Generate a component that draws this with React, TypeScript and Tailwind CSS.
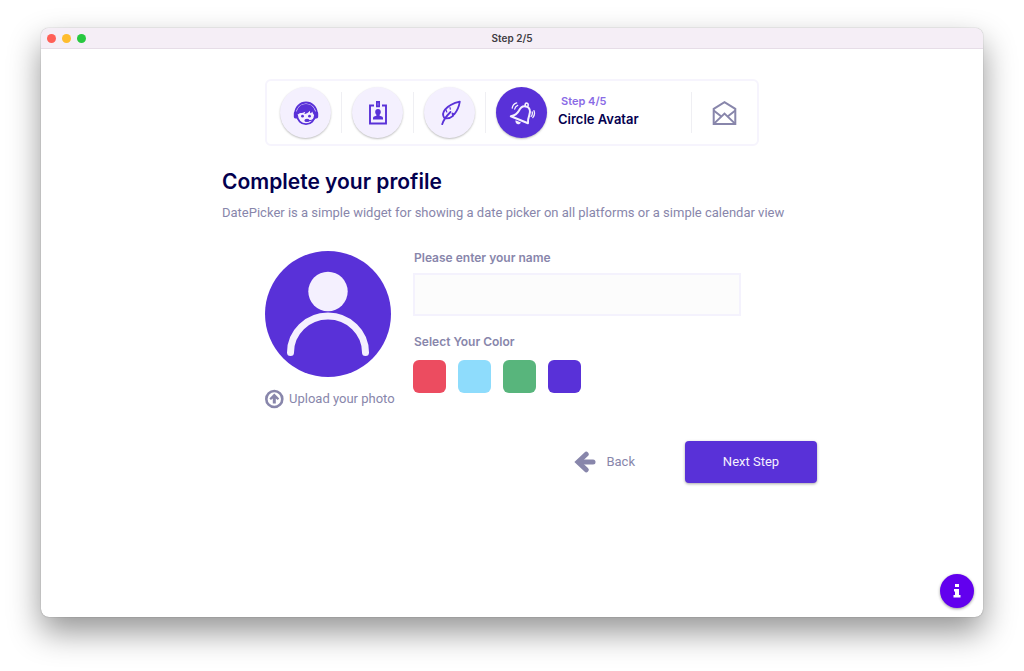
const colors = [
  { name: 'Red', className: 'bg-[#ec4c60]' },
  { name: 'Sky', className: 'bg-[#8edcfc]' },
  { name: 'Green', className: 'bg-[#58b57c]' },
  { name: 'Purple', className: 'bg-[#5931d8]' },
]

function SupportIcon() {
  return (
    <svg width="26" height="26" viewBox="0 0 26 26" fill="none" stroke="currentColor">
      <path d="M2.2 13.5a10.8 11 0 0 1 21.6 0" strokeWidth="1.8" />
      <path d="M4 11.5H2.5C1.3 11.5.8 12.4.8 13.5v3c0 1.2.6 2 1.700 2H4zM22 11.5h1.500c1.200 0 1.700.9 1.700 2v3c0 1.200-.6 2-1.700 2H22z" fill="currentColor" stroke="none" />
      <path d="M4 15c.3 5.500 4 9.200 9 9.200s8.700-3.700 9-9.200" strokeWidth="1.8" />
      <path
        d="M3.500 16C3 8.500 7 4 13 4s10 4.500 9.500 12c-1.700-.7-2.600-2.200-3.200-4.500-.5 1-1.200 1.500-2.300 1.700.2-.8.200-1.600-.1-2.400-1.400 2-3.300 3.200-5.700 3.300.6-.8.9-1.500 1-2.400-1.600.8-3 1.300-4.400 1.300-1.600.2-2.900 1.200-4.300 3z"
        fill="currentColor"
        stroke="none"
      />
      <circle cx="9.5" cy="16.2" r="1.4" fill="currentColor" stroke="none" />
      <circle cx="16.5" cy="16.2" r="1.4" fill="currentColor" stroke="none" />
      <path d="M22.500 17.500c-1.500 2.300-4 3.200-7 3.200" strokeWidth="1.3" />
      <ellipse cx="14" cy="20.4" rx="2.600" ry="1.7" fill="currentColor" stroke="none" />
    </svg>
  )
}

function BadgeIcon() {
  return (
    <svg width="26" height="26" viewBox="0 0 26 26" fill="none" stroke="currentColor" strokeWidth="1.9">
      <path d="M9 5.500H5V23.500H21V5.500H17" />
      <path d="M11.900 1.800h2.200v4.600h-2.200z" strokeWidth="1.8" />
      <path
        d="M13 9c1.800 0 2.800 1.200 2.800 2.900 0 1.200-.5 2.200-1.200 2.800v1.100l2.300.8c.8.3 1.100.9 1.100 1.700v1.200H8v-1.200c0-.8.3-1.400 1.100-1.700l2.300-.8v-1.100c-.7-.6-1.200-1.600-1.200-2.800C10.200 10.200 11.200 9 13 9z"
        fill="currentColor"
        stroke="none"
      />
    </svg>
  )
}

function FeatherIcon() {
  return (
    <svg width="26" height="26" viewBox="0 0 26 26" fill="none" stroke="currentColor" strokeWidth="1.8" strokeLinecap="round" strokeLinejoin="round">
      <path d="M7.200 17.800C5.500 15.200 6 12 8.200 9.400 11.800 5.200 17 3 22.800 1.700c-.8 5-2.600 9.400-5.600 12.600l-1.700-.8.600 2.300c-2 1.800-4.400 2.700-7.100 2.600" />
      <path d="M5.200 24.200C6.300 20.500 8.500 17 13.500 12" />
      <path d="M8.800 9.500l1 2.400M13 7.500l.3 1.700" strokeWidth="1.2" />
    </svg>
  )
}

function BellIcon() {
  return (
    <svg width="28" height="28" viewBox="0 0 28 28" fill="none" stroke="currentColor" strokeWidth="2" strokeLinecap="round" strokeLinejoin="round">
      <path d="M2.800 17.300L20 24.200c-.3-2.700.3-5.200 1.300-8 1.400-4 .5-7.200-2.500-8.500-3.200-1.300-6.100.2-7.900 4-1.700 3.200-4.300 4.800-8.100 5.600z" />
      <path d="M17.300 6.900c-.5-1.700.2-2.900 1.300-2.900 1.400.1 2 1.400 1.300 3.200" strokeWidth="1.6" />
      <path d="M7.500 21.200l5.500 2.200c-1 1.700-2.400 2.100-3.700 1.500-1.400-.5-2.100-2-1.800-3.700z" fill="currentColor" stroke="none" />
      <path d="M4.200 9.200c.4-2.700 1.900-4.500 4.500-5.300M6.700 10c.3-1.800 1.300-3 3-3.700" strokeWidth="1.3" />
      <path d="M24.200 13c.4 1.700.1 3.200-1 4.400M26 11.700c1 2.700.5 5-1.200 6.900" strokeWidth="1.3" />
    </svg>
  )
}

function OpenMailIcon() {
  return (
    <svg width="25" height="26" viewBox="0 0 25 26" fill="none" stroke="currentColor" strokeWidth="2">
      <path d="M1.700 8.900L12.500 2.200l10.800 6.700V24H1.700z" />
      <path d="M1.700 10.500l7 5.500M23.300 10.500l-7 5.500M2 23.600l10.500-10 10.500 10" />
    </svg>
  )
}

function UploadIcon() {
  return (
    <svg width="20" height="20" viewBox="0 0 20 20">
      <circle cx="9.300" cy="10" r="8" fill="none" stroke="currentColor" strokeWidth="2.6" />
      <path d="M9.300 4.500l4.900 5-1.500 1.500-1.900-1.500v5H7.800v-5L5.900 11 4.400 9.500z" fill="currentColor" />
    </svg>
  )
}

function BackArrowIcon() {
  return (
    <svg width="22" height="22" viewBox="0 0 22 22" fill="none" stroke="currentColor" strokeLinecap="round">
      <path d="M5 11H19" strokeWidth="5" />
      <path d="M12.200 3.200L4 11l8.200 7.800" strokeWidth="5" strokeLinejoin="miter" />
    </svg>
  )
}

function InfoIcon() {
  return (
    <svg width="8" height="14" viewBox="0 0 8 14" fill="currentColor">
      <path d="M2 0h4v3H2zM1 5h5v6h1.500v2.500h-7V11H2V7.500H1z" />
    </svg>
  )
}

function AvatarIcon() {
  return (
    <svg className="size-[126px]" viewBox="0 0 126 126" role="img" aria-label="Avatar">
      <circle cx="63" cy="63" r="63" fill="#5931d8" />
      <circle cx="63" cy="40.5" r="19.7" fill="#f4f0fe" />
      <path d="M25.500 101.500a37.500 36.500 0 0 1 75 0" fill="none" stroke="#f4f0fe" strokeWidth="7" strokeLinecap="round" />
    </svg>
  )
}

const doneSteps = [
  { label: 'Support', icon: <SupportIcon /> },
  { label: 'Badge', icon: <BadgeIcon /> },
  { label: 'Feather', icon: <FeatherIcon /> },
]

function Separator() {
  return <div className="h-[41px] w-px shrink-0 bg-[#efeff3]" />
}

function Stepper() {
  return (
    <nav className="mx-auto flex h-[67px] w-full max-w-[494px] items-center rounded-md border-2 border-[#f6f4fd] pl-[13px]">
      {doneSteps.map((step) => (
        <div key={step.label} className="flex items-center">
          <button
            aria-label={step.label}
            className="mr-[10px] flex size-[51px] items-center justify-center rounded-full bg-[#f4f0fe] text-[#5931d8] shadow-[0_1px_2px_rgba(0,0,0,0.25)]"
          >
            {step.icon}
          </button>
          <Separator />
          <div className="w-[10px]" />
        </div>
      ))}
      <button
        aria-label="Circle Avatar"
        className="flex size-[51px] items-center justify-center rounded-full bg-[#5931d8] text-[#f4f0fe] shadow-[0_1px_2px_rgba(0,0,0,0.25)]"
      >
        <BellIcon />
      </button>
      <div className="mr-auto ml-[11px] pb-1">
        <p className="pl-[3px] text-[11px] leading-4 font-semibold text-[#8a6be6]">Step 4/5</p>
        <p className="text-[13px] leading-5 font-semibold text-[#03004f]">Circle Avatar</p>
      </div>
      <Separator />
      <button aria-label="Message" className="mx-5 text-[#8886ab]">
        <OpenMailIcon />
      </button>
    </nav>
  )
}

export default function App() {
  return (
    <div className="flex min-h-screen bg-white px-[41px] pt-7 pb-[54px] font-['Inter','Liberation_Sans',sans-serif]">
      <div className="relative flex flex-1 flex-col rounded-lg bg-white shadow-[0_0_1px_rgba(0,0,0,0.5),0_15px_32px_rgba(0,0,0,0.42)]">
        <header className="flex h-[21px] items-center rounded-t-lg border-b border-[#e6dde7] bg-[#f5eef6] px-[6px]">
          <div className="flex flex-1 gap-[6px]">
            <span className="size-[9px] rounded-full bg-[#ff5f57]" />
            <span className="size-[9px] rounded-full bg-[#febc2e]" />
            <span className="size-[9px] rounded-full bg-[#28c840]" />
          </div>
          <h1 className="text-[10px] leading-4 font-semibold text-[#403c42]">Step 2/5</h1>
          <div className="flex-1" />
        </header>

        <main className="px-6 pt-[30px]">
          <Stepper />

          <section className="mx-auto mt-5 max-w-[610px] pl-[15px]">
            <h2 className="text-[21px] leading-8 font-semibold text-[#03004f]">Complete your profile</h2>
            <p className="mt-1 font-['Roboto',sans-serif] text-[13px] leading-[22px] text-[#8886ab]">
              DatePicker is a simple widget for showing a date picker on all platforms or a simple calendar view
            </p>

            <div className="mt-[27px] flex gap-[15px] pl-[43px]">
              <div className="w-[133px] shrink-0">
                <AvatarIcon />
                <button className="mt-3 flex items-center gap-1 font-['Roboto',sans-serif] text-[13px] leading-5 whitespace-nowrap text-[#8886ab]">
                  <UploadIcon />
                  Upload your photo
                </button>
              </div>
              <div className="w-full max-w-[328px] text-[#8886ab]">
                <label htmlFor="name" className="block pl-px text-[12px] leading-[14px] font-semibold">
                  Please enter your name
                </label>
                <input
                  id="name"
                  type="text"
                  className="mt-2 block h-[43px] w-full border-2 border-[#f4f2fd] bg-[#fcfcfc] px-3 text-[13px] outline-none"
                />
                <p id="color-label" className="mt-4 pl-px text-[12px] leading-5 font-semibold">
                  Select Your Color
                </p>
                <div role="group" aria-labelledby="color-label" className="mt-2 flex gap-3">
                  {colors.map((color) => (
                    <button key={color.name} aria-label={color.name} className={`size-[33px] rounded-md ${color.className}`} />
                  ))}
                </div>
              </div>
            </div>

            <div className="mt-8 flex items-center justify-end gap-[50px] font-['Roboto',sans-serif] text-[13px]">
              <button className="flex items-center gap-[10px] text-[#8886ab]">
                <BackArrowIcon />
                Back
              </button>
              <button className="h-[42px] w-[132px] rounded bg-[#5931d8] text-[#f4f0fe] shadow-[0_1px_3px_rgba(0,0,0,0.35)]">
                Next Step
              </button>
            </div>
          </section>
        </main>

        <button
          aria-label="Information"
          className="absolute right-[9px] bottom-[9px] flex size-[34px] items-center justify-center rounded-full bg-[#6200ee] text-white shadow-[0_1px_3px_rgba(0,0,0,0.4)]"
        >
          <InfoIcon />
        </button>
      </div>
    </div>
  )
}
